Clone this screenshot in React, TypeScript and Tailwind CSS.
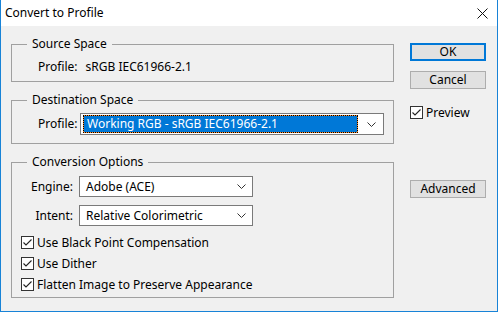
import { ReactNode } from 'react';

const font = { fontFamily: '"Noto Sans", "Open Sans", sans-serif' };

function Check() {
  return (
    <div className="w-[13px] h-[13px] border border-[#333333] bg-white flex items-center justify-center shrink-0">
      <svg width="11" height="11" viewBox="0 0 11 11">
        <path d="M1.5 5.5 L4 8 L9.5 2.5" stroke="#222" strokeWidth="1.1" fill="none" />
      </svg>
    </div>
  );
}

function Chevron() {
  return (
    <svg width="9" height="5" viewBox="0 0 9 5" className="shrink-0">
      <path d="M0.5 0.5 L4.5 4.5 L8.5 0.5" stroke="#333" strokeWidth="1" fill="none" />
    </svg>
  );
}

function Button({ children, primary }: { children: ReactNode; primary?: boolean }) {
  return (
    <div
      className={`w-[76px] h-[18px] flex items-center justify-center bg-[#e1e1e1] ${
        primary ? 'border-2 border-[#0078d7]' : 'border border-[#adadad]'
      }`}
    >
      {children}
    </div>
  );
}

function Group({ title, children, className }: { title: string; children: ReactNode; className?: string }) {
  return (
    <fieldset className={`border border-[#a0a0a0] ${className ?? ''}`}>
      <legend className="ml-[15px] px-[5px] leading-[16px]">{title}</legend>
      {children}
    </fieldset>
  );
}

function Select({ value, width }: { value: string; width: string }) {
  return (
    <div className={`${width} h-[21px] bg-white border border-[#7a7a7a] flex items-center pl-[6px] pr-[6px]`}>
      <span className="flex-1">{value}</span>
      <Chevron />
    </div>
  );
}

export default function App() {
  return (
    <div className="w-[498px] h-[312px] bg-[#f0f0f0] text-[12px] text-black border-l border-r border-b border-[#1883d7] flex flex-col" style={font}>
      {/* Title bar */}
      <div className="h-[26px] bg-white flex items-center pl-[4px] pr-[9px] shrink-0">
        <span className="flex-1">Convert to Profile</span>
        <svg width="11" height="11" viewBox="0 0 11 11">
          <path d="M0.5 0.5 L10.5 10.5 M10.5 0.5 L0.5 10.5" stroke="#111" strokeWidth="1" />
        </svg>
      </div>

      <div className="flex flex-1">
        {/* Left column */}
        <div className="w-[383px] ml-[10px] mt-[10px] flex flex-col">
          <Group title="Source Space" className="h-[46px]">
            <div className="flex gap-[8px] pl-[26px] pt-[6px]">
              <span>Profile:</span>
              <span>sRGB IEC61966-2.1</span>
            </div>
          </Group>

          <Group title="Destination Space" className="h-[52px] mt-[10px]">
            <div className="flex items-center pl-[26px] pt-[5px]">
              <span className="w-[42px]">Profile:</span>
              <div className="w-[304px] h-[22px] bg-white border border-[#7a7a7a] flex items-center pl-[2px] pr-[7px]">
                <div className="flex-1 h-[18px] bg-[#ff8c2a] border border-dotted border-black mr-[9px]">
                  <div className="h-full bg-[#0078d7] text-white leading-[16px] pl-[3px]">
                    Working RGB - sRGB IEC61966-2.1
                  </div>
                </div>
                <Chevron />
              </div>
            </div>
          </Group>

          <Group title="Conversion Options" className="h-[144px] mt-[10px]">
            <div className="flex flex-col pt-[6px]">
              <div className="flex items-center">
                <span className="w-[67px] text-right pr-[6px]">Engine:</span>
                <Select value="Adobe (ACE)" width="w-[174px]" />
              </div>
              <div className="flex items-center mt-[8px]">
                <span className="w-[67px] text-right pr-[6px]">Intent:</span>
                <Select value="Relative Colorimetric" width="w-[174px]" />
              </div>
              <div className="flex flex-col gap-[8px] pl-[9px] mt-[10px]">
                <label className="flex items-center gap-[3px] h-[13px]">
                  <Check />
                  <span>Use Black Point Compensation</span>
                </label>
                <label className="flex items-center gap-[3px] h-[13px]">
                  <Check />
                  <span>Use Dither</span>
                </label>
                <label className="flex items-center gap-[3px] h-[13px]">
                  <Check />
                  <span>Flatten Image to Preserve Appearance</span>
                </label>
              </div>
            </div>
          </Group>
        </div>

        {/* Right column */}
        <div className="w-[76px] ml-[16px] mt-[17px] flex flex-col">
          <Button primary>OK</Button>
          <div className="mt-[10px]">
            <Button>Cancel</Button>
          </div>
          <label className="flex items-center gap-[3px] mt-[17px] h-[13px]">
            <Check />
            <span>Preview</span>
          </label>
          <div className="mt-[61px]">
            <Button>Advanced</Button>
          </div>
        </div>
      </div>
    </div>
  );
}
